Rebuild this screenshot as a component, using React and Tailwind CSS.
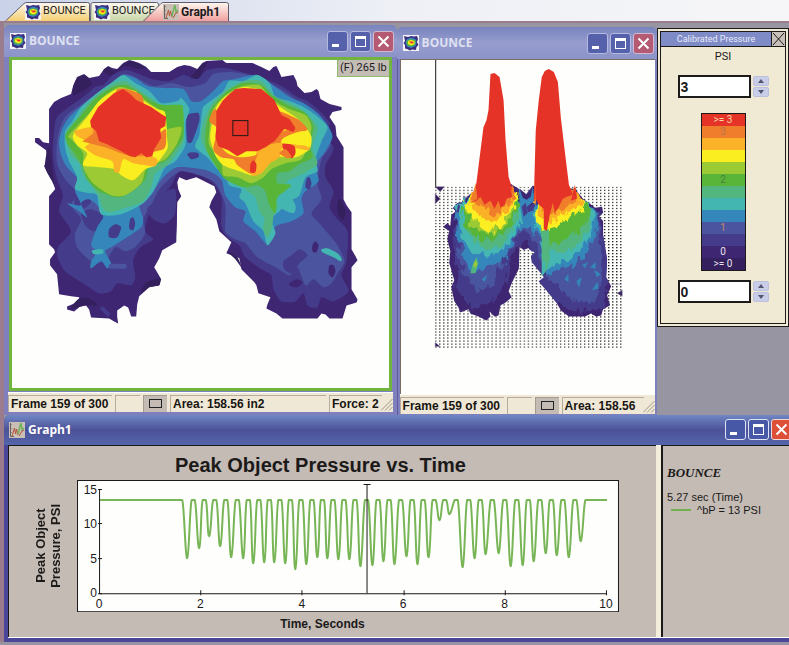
import React from "react";

const COLORS = {
  red: "#e63327",
  orange: "#f07d2b",
  amber: "#fbb128",
  yellow: "#fbee20",
  lime: "#9bca35",
  green: "#58b537",
  sea: "#53b67e",
  teal: "#44b6b1",
  blue: "#3586ba",
  indigo: "#4a549f",
  purple: "#453b8b",
  dark: "#3f2672",
  deep: "#33205c",
};

// closed, slightly rounded curve through every point
const blob = (str) => {
  const pts = str.split(" ").map((p) => p.split(",").map(Number));
  const n = pts.length;
  let d = `M${pts[0]}`;
  for (let i = 0; i < n; i++) {
    const a = pts[(i + n - 1) % n];
    const b = pts[i];
    const c = pts[(i + 1) % n];
    const e = pts[(i + 2) % n];
    d += `C${b[0] + (c[0] - a[0]) / 8},${b[1] + (c[1] - a[1]) / 8}`;
    d += ` ${c[0] - (e[0] - b[0]) / 8},${c[1] - (e[1] - b[1]) / 8} ${c}`;
  }
  return `${d}Z`;
};

const outline =
  "50,110 55,103 62,99 72,95 74,87 78,78 85,75 90,79 100,77 105,70 109,67 113,69 118,70 124,64 130,61 134,62 140,64 147,68 152,73 170,73 178,68 185,66 191,67 198,70 203,64 207,62 223,61 227,64 253,64 262,68 270,72 274,68 277,67 279,71 282,78 294,76 297,82 298,87 305,94 312,93 317,90 319,92 321,100 330,105 342,108 342,111 333,113 330,118 336,127 337,137 344,148 344,200 347,206 352,213 352,250 356,257 358,261 352,268 352,290 358,300 357,303 347,306 343,319 330,319 326,315 322,314 318,319 283,319 277,314 267,309 268,305 271,298 259,294 257,286 255,283 242,270 240,259 227,254 232,243 220,232 217,220 210,208 212,202 217,193 215,187 205,182 197,178 187,181 180,178 178,183 179,190 182,197 178,203 177,243 163,251 160,259 155,268 162,280 160,286 150,288 140,297 138,305 137,317 132,317 129,308 125,306 118,311 118,317 119,324 115,322 110,319 92,318 90,310 87,306 81,307 75,312 68,310 68,307 80,302 80,298 72,297 60,295 58,275 51,266 51,260 56,253 55,250 50,245 50,197 56,190 55,185 45,167 48,160 47,151 36,143 36,139 40,139 44,143 50,144";

const layers = [
  ["deep", "74,88 78,79 85,76 90,80 92,86 80,94 74,96"],
  ["deep", "46,168 48,152 51,150 54,176 56,188 53,182"],
  ["deep", "80,299 92,300 98,306 86,306 72,309"],
  ["deep", "104,72 109,68 116,72 130,62 146,68 140,70 126,67 112,76"],
  ["deep", "196,73 203,66 208,63 200,78 196,86 190,80"],
  ["deep", "338,204 341,200 346,212 344,220 339,216"],
  ["deep", "228,252 238,258 242,268 236,260"],
  ["deep", "146,284 160,279 160,286 150,288 142,294"],
  ["purple", "55,132 58,118 70,108 84,98 96,88 104,86 114,76 126,71 140,75 152,80 170,82 184,76 198,80 208,71 226,69 246,74 266,80 284,88 298,98 308,102 322,114 330,124 328,138 334,150 326,166 326,178 334,192 330,208 338,220 348,232 347,262 342,276 349,292 334,302 322,298 318,308 308,306 304,294 296,302 282,302 274,290 272,276 262,270 246,258 240,246 228,238 222,226 222,198 212,182 196,174 180,172 172,186 160,200 150,214 146,232 154,240 144,246 138,252 134,262 136,278 132,286 118,284 112,292 100,294 84,284 66,272 58,256 60,246 72,232 60,212 64,196 58,180 54,158"],
  ["indigo", "58,142 62,126 68,116 84,104 98,94 112,84 124,75 136,78 154,87 172,84 190,88 206,84 214,75 232,73 254,77 270,84 288,94 300,104 316,114 326,128 331,146 322,160 318,184 322,200 312,214 320,224 330,236 338,246 345,262 338,274 332,284 324,288 314,280 306,286 298,268 290,276 276,268 258,258 246,244 236,240 226,232 226,206 216,184 200,176 182,172 172,178 160,190 154,202 144,220 146,234 136,248 126,252 116,248 106,262 92,262 78,248 76,234 82,220 72,206 78,194 66,180 58,164"],
  ["dark", "157,206 164,202 177,203 176,243 168,232 158,222 150,212"],
  ["purple", "76,196 82,194 92,202 84,210 76,206"],
  ["purple", "82,214 92,210 104,216 102,228 94,232 86,226"],
  ["purple", "284,262 292,256 300,250 308,256 300,264 292,274 285,270"],
  ["dark", "290,284 297,280 303,283 298,288 291,287"],
  ["dark", "313,246 316,242 319,246 317,253 313,252"],
  ["dark", "330,266 334,266 336,272 333,278 329,274"],
  ["blue", "60,142 64,128 72,116 84,106 98,96 114,84 124,76 136,79 148,87 164,89 184,90 192,102 202,102 214,92 224,82 236,80 258,76 276,88 290,98 304,104 318,114 328,126 333,138 326,152 316,166 319,182 306,192 302,200 304,214 292,222 278,226 272,232 270,245 266,244 256,232 244,222 246,212 236,208 226,196 222,180 210,172 196,169 178,168 166,176 158,186 152,196 140,204 144,220 142,228 128,238 112,248 106,252 112,264 108,269 102,262 92,269 92,262 98,252 92,246 98,228 104,218 100,208 90,200 82,204 88,218 80,212 68,204 82,206 76,192 79,180 68,168 62,156"],
  ["purple", "187,120 190,115 199,114 200,122 193,142 188,142"],
  ["purple", "188,155 192,153 199,154 199,158 192,160"],
  ["purple", "164,194 176,190 176,214 166,224 154,220 148,210 156,202"],
  ["purple", "110,230 116,225 122,228 118,238 110,238"],
  ["purple", "131,220 134,218 136,224 134,231 130,229"],
  ["purple", "307,180 310,178 312,184 310,190 306,188"],
  ["teal", "66,132 72,124 82,108 98,94 112,84 124,76 136,84 150,92 162,104 178,102 182,99 190,110 186,124 186,146 176,162 166,168 160,180 154,192 144,204 122,215 102,215 98,196 90,194 76,190 78,178 70,162 66,148"],
  ["blue", "194,150 206,158 214,170 224,182 226,170 204,150"],
  ["teal", "196,148 200,136 202,120 204,108 214,100 224,92 230,82 244,82 258,76 270,84 276,98 290,102 304,108 316,116 328,128 322,142 316,160 318,172 306,178 300,196 290,202 280,212 272,220 276,234 268,246 264,232 254,222 246,204 240,198 242,190 230,186 226,176 216,168 208,158"],
  ["sea", "67,134 76,122 86,108 100,94 116,84 126,82 136,88 150,98 162,106 176,106 184,114 184,142 176,156 168,166 156,174 152,188 144,202 128,208 110,213 103,208 100,198 92,186 84,176 80,164 72,156 68,144"],
  ["sea", "202,140 204,124 212,106 226,92 244,82 262,82 274,96 290,104 304,112 318,128 313,148 318,164 308,172 296,178 288,182 286,192 278,208 270,222 260,212 256,198 246,190 246,182 228,180 218,168 208,154"],
  ["teal", "276,196 288,194 296,206 294,214 280,208"],
  ["green", "67,134 84,114 96,100 114,88 126,86 138,92 152,102 164,106 182,106 184,114 184,138 176,150 166,162 150,168 146,180 136,190 120,198 100,192 88,180 84,168 74,152 68,144"],
  ["green", "206,136 211,112 226,94 244,84 262,86 272,96 288,106 306,114 314,128 310,146 313,158 298,166 290,172 278,174 278,184 292,186 278,198 276,214 270,206 266,192 258,186 244,188 226,180 216,166 208,152"],
  ["lime", "70,136 92,112 104,98 120,88 134,92 150,104 166,116 164,130 182,128 178,144 166,160 148,168 142,184 126,196 112,196 94,184 84,168 84,154 72,140"],
  ["lime", "210,132 213,112 224,98 240,88 260,86 272,100 290,110 306,116 312,128 308,146 302,160 286,164 272,170 264,178 252,184 238,178 224,176 222,160 210,146"],
  ["yellow", "74,136 88,118 100,102 118,90 136,92 142,100 158,110 166,114 168,140 168,150 156,166 146,170 134,181 122,176 116,170 100,168 84,166 88,154 78,146"],
  ["yellow", "212,128 217,108 228,96 244,88 264,92 278,106 296,118 306,128 312,138 310,150 296,158 274,158 264,166 254,176 240,172 224,166 216,156 211,140"],
  ["amber", "76,132 94,128 110,136 130,150 146,154 158,160 156,167 146,166 134,164 124,160 120,173 115,172 113,162 96,156 86,148 90,144 78,137"],
  ["orange", "84,142 94,134 94,126 104,128 112,144 124,146 140,154 164,150 167,140 166,130 156,140 146,156 128,156 106,148 86,143"],
  ["orange", "118,90 128,90 142,96 144,106 130,102 118,98"],
  ["amber", "256,172 258,150 274,144 286,140 298,146 310,146 309,151 296,149 282,150 280,158 268,166 262,174"],
  ["orange", "210,122 216,110 226,130 222,146 228,154 240,158 256,156 270,146 284,132 290,130 278,112 298,120 308,130 300,134 284,142 274,146 260,152 258,164 254,174 250,174 238,166 234,160 222,158 214,150 218,130"],
  ["amber", "258,156 264,148 276,144 284,146 272,162 262,174 252,176"],
  ["red", "283,145 288,144 295,147 296,154 292,159 285,152"],
  ["red", "251,165 254,161 257,165 256,173 251,173"],
  ["yellow", "283,140 290,136 304,132 310,140 310,148 304,146 283,144"],
  ["orange", "280,154 286,150 292,157 288,159"],
  ["teal", "93,251 103,250 104,254 95,255"],
  ["sea", "266,218 274,214 272,230 268,238 264,230"],
  ["teal", "322,250 328,249 338,254 342,259 341,262 334,258 323,253"],
];

const redPeaks = [
  "91,122 99,108 107,101 115,94 124,90 131,95 137,101 152,108 162,115 167,118 166,127 161,130 162,139 155,150 153,157 147,158 142,154 136,158 131,157 122,152 108,145 100,142 97,132 92,128",
  "217,128 217,112 223,102 229,96 236,90 244,89 262,90 275,101 282,116 290,120 296,129 294,133 285,130 275,142 266,148 258,152 247,152 238,157 229,151 219,147 216,138",
];

const surface = [
  ["purple", "455,205 476,190 520,202 548,200 580,198 600,212 604,236 606,260 606,284 600,308 574,310 552,300 536,280 530,258 524,240 516,244 510,260 504,284 494,300 474,308 458,292 455,262 453,230"],
  ["indigo", "455,212 480,200 516,206 524,216 540,202 584,204 598,220 600,250 602,282 592,302 574,300 556,286 543,272 534,240 524,230 514,238 508,252 498,266 492,284 478,290 466,276 458,256"],
  ["blue", "455,212 470,196 518,196 526,216 536,204 590,200 597,217 593,237 587,252 573,263 558,268 546,274 540,240 532,228 522,226 512,240 504,258 494,264 480,268 470,272 464,254 457,240"],
  ["teal", "457,206 470,194 518,196 521,216 517,230 504,248 490,254 472,252 462,238"],
  ["teal", "534,204 560,196 590,202 593,214 590,230 584,244 571,258 557,262 547,266 541,240 534,222"],
  ["sea", "461,206 474,194 519,196 518,216 510,232 502,244 482,249 468,236"],
  ["sea", "536,206 572,196 591,206 588,228 581,240 568,250 558,252 549,248 542,236"],
  ["green", "461,206 474,194 519,196 518,208 510,224 497,237 477,240 467,227"],
  ["green", "535,204 570,196 591,206 586,218 578,230 566,236 556,244 548,240 540,226"],
  ["lime", "463,204 474,194 518,196 515,208 508,220 498,230 486,236 472,224"],
  ["yellow", "464,202 474,190 518,192 514,208 508,214 500,225 487,233 480,223 470,216"],
  ["yellow", "533,200 548,188 584,196 580,210 563,220 554,226 545,230 538,222"],
  ["amber", "468,202 476,188 514,192 512,204 507,211 493,222 480,216"],
  ["amber", "533,198 548,186 580,192 580,204 570,210 560,214 552,222 540,216"],
  ["orange", "472,200 478,184 512,188 510,202 504,208 495,216 486,208"],
  ["orange", "534,194 546,184 576,188 576,200 566,206 560,208 552,216 542,208"],
];

// lower turning points of the trace
const valleys = [
  [187, 557], [199, 547], [209, 535], [220, 545], [231, 556], [243, 557],
  [253, 562], [264, 561], [274, 561], [285, 562], [295, 568], [306, 563],
  [317, 556], [327, 557], [338, 558], [349, 558], [360, 565], [372, 564],
  [383, 560], [394, 563], [406, 555], [417, 563], [428, 556], [439, 519],
  [449, 513], [462, 566], [474, 557], [485, 553], [498, 552], [510, 565],
  [522, 564], [533, 560], [545, 552], [556, 554], [568, 556], [580, 540],
];

const TOP = 499;

const pressurePath = () => {
  let d = `M100,${TOP}H182`;
  let from = 182;
  valleys.forEach(([x, y], i) => {
    const next = valleys[i + 1];
    const mid = next ? (x + next[0]) / 2 : 586;
    const rise = mid - 1.5;
    d += `C${from + 2},${TOP + 4} ${x - 2},${y + 1} ${x},${y}`;
    d += `C${x + 2},${y - 2} ${rise - 2},${TOP + 4} ${rise},${TOP}`;
    from = mid + 1.5;
    d += `H${from}`;
  });
  return `${d}H606`;
};

const scale = [
  ["bg-[#e63327]", ">= 3", "text-[#f6d9a8]"],
  ["bg-[#f07d2b]", "3", "text-[#b0784f]"],
  ["bg-[#fbb128]", "", ""],
  ["bg-[#fbee20]", "", ""],
  ["bg-[#9bca35]", "", ""],
  ["bg-[#58b537]", "2", "text-[#4a8040]"],
  ["bg-[#53b67e]", "", ""],
  ["bg-[#44b6b1]", "", ""],
  ["bg-[#3586ba]", "", ""],
  ["bg-[#4a549f]", "1", "text-[#c58a6a]"],
  ["bg-[#453b8b]", "", ""],
  ["bg-[#3f2672]", "0", "text-[#e8e4ee]"],
  ["bg-[#33205c]", ">= 0", "text-[#e8e4ee]"],
];

const BounceIcon = () => (
  <svg viewBox="0 0 16 16" className="h-4 w-4 shrink-0" aria-hidden="true">
    <rect width="16" height="16" fill="#f4f3f6" />
    <path d="M1 1l4 1 3-1 3 .5L14 1l1 3-1 3 1.500 3-2 2-.5 3-4-.5-2 1-3-1.500-2-.5V10L.5 8 2 6z" fill="#3b2f80" />
    <path d="M4 4l4-1.500 4.500 1.500 1 3.500-1 3.500-4.500 2-4-1.500L2.500 7.500z" fill="#3586ba" />
    <path d="M4 5.500L8 4l4.500 1.500V9l-3 2.500L5 11 3.500 8.500z" fill="#58b537" />
    <path d="M5 6l3-1 3.500 1v3l-3 1.500L5 9z" fill="#fbee20" />
    <path d="M5.500 6.500h5V8L8 8.800l-.5-1z" fill="#e63327" />
  </svg>
);

const GraphIcon = () => (
  <svg viewBox="0 0 16 16" className="h-4 w-4 shrink-0" aria-hidden="true">
    <rect width="16" height="16" fill="#c9bfb6" />
    <path d="M1.500 1v13.500H5M1.500 2.500h1M1.500 6.500h1M1.500 10.500h1" stroke="#6b625f" fill="none" />
    <path d="M3 14l2.500-8 1 6 1-5 1.500 6" stroke="#b5533c" fill="none" />
    <path d="M9 12l2-8 1-3 1 7 2-2" stroke="#6fb45a" fill="none" strokeWidth="1.500" />
    <path d="M10 14l3-5 2-1" stroke="#b5533c" fill="none" />
  </svg>
);

const TitleButtons = ({ active }) => {
  const base = "flex h-[21px] w-[21px] shrink-0 items-center justify-center rounded-[3px] border";
  const blue = active ? "border-[#dfe2f4] bg-[#4658a6]" : "border-[#b4bae0] bg-[#5561ab]";
  const red = active ? "border-[#f3d9d4] bg-[#dd4f36]" : "border-[#d3b9cf] bg-[#b45a72]";
  return (
    <div className="flex gap-[2px]">
      <button aria-label="Minimize" className={`${base} ${blue}`}>
        <svg viewBox="0 0 19 19" className="h-[19px] w-[19px]">
          <path d="M4 12h7v3H4z" fill="#fff" />
        </svg>
      </button>
      <button aria-label="Maximize" className={`${base} ${blue}`}>
        <svg viewBox="0 0 19 19" className="h-[19px] w-[19px]">
          <path d="M4 4h11v11H4zM5 7v7h9V7z" fill="#fff" fillRule="evenodd" />
        </svg>
      </button>
      <button aria-label="Close" className={`${base} ${red}`}>
        <svg viewBox="0 0 19 19" className="h-[19px] w-[19px]">
          <path d="M4.500 4.500l10 10M14.500 4.500l-10 10" stroke="#fff" strokeWidth="2" />
        </svg>
      </button>
    </div>
  );
};

const StatusBar = ({ area, force }) => {
  const cell = "shrink-0 border-t border-l border-[#b9ab9b] px-[2px]";
  return (
    <div className="flex h-5 gap-[3px] overflow-hidden border-t border-white bg-[#efe8d6] pt-[2px] font-['Liberation_Sans',sans-serif] text-xs leading-4 font-bold whitespace-nowrap text-[#181512]">
      <div className={`${cell} w-[104px]`}>Frame 159 of 300</div>
      <div className={`${cell} w-[25px]`} />
      <div className="flex w-6 shrink-0 items-center justify-center border-t border-l border-[#a39a92] bg-[#c5bbb5]">
        <span className="h-[9px] w-[13px] border border-[#222]" />
      </div>
      <div className={force ? `${cell} w-[156px]` : `${cell} min-w-0 flex-1 shrink`}>
        {area}
      </div>
      {force && (
        <div className="min-w-0 flex-1 overflow-hidden border-t border-l border-[#b9ab9b] px-[2px]">
          {force}
        </div>
      )}
      <svg viewBox="0 0 12 16" className="-ml-1 h-4 w-3 shrink-0" aria-hidden="true">
        <path d="M0 15.500L11.500 4M4 15.500L11.500 8M8 15.500l3.500-3.500" stroke="#a29685" fill="none" />
      </svg>
    </div>
  );
};

const PressureMap = () => (
  <svg viewBox="13 61 376 327" className="block h-auto w-full bg-[#fefefd]" role="img" aria-label="Pressure map">
    <polygon points={outline} fill={COLORS.dark} />
    {layers.map(([c, pts], i) => (
      <path key={i} d={blob(pts)} fill={COLORS[c]} />
    ))}
    <path d="M102,308l8,8" stroke={COLORS.purple} strokeWidth="4" fill="none" />
    <path d="M112,267h13" stroke={COLORS.indigo} strokeWidth="5" strokeLinecap="round" />
    {redPeaks.map((pts) => (
      <polygon key={pts} points={pts} fill={COLORS.red} />
    ))}
    <rect x="233.500" y="121.500" width="15" height="15" fill="none" stroke="#1c1a19" />
  </svg>
);

const SurfacePlot = () => (
  <svg viewBox="401 60 253 331" className="block h-auto w-full bg-[#fefefd]" role="img" aria-label="Pressure surface">
    <defs>
      <pattern id="dots" x="435" y="186" width="4" height="3" patternUnits="userSpaceOnUse">
        <rect width="1.200" height="1.100" fill="#000" />
      </pattern>
      <filter id="ragged" x="-5%" y="-5%" width="110%" height="110%">
        <feTurbulence type="fractalNoise" baseFrequency="0.2 0.1" numOctaves="2" seed="4" />
        <feDisplacementMap in="SourceGraphic" scale="13" xChannelSelector="R" yChannelSelector="G" />
      </filter>
      <clipPath id="body">
        <path d="M452,208L458,200 470,192 478,186 510,182 520,188 526,192 533,186 574,186 580,198 590,203 594,206 600,206 602,212 598,216 602,234 606,258 605,276 610,285 606,294 609,304 602,308 600,314 590,312 584,315 568,315 560,309 556,302 548,292 538,280 542,274 530,262 531,250 524,238 520,250 519,266 511,280 507,290 511,296 500,304 498,314 490,312 486,317 476,314 468,308 460,310 454,298 450,286 454,278 449,262 452,250 447,236 450,224 445,224 450,216z" />
      </clipPath>
    </defs>
    <rect x="435" y="186" width="186" height="161" fill="url(#dots)" />
    <path d="M435.500 59v128" stroke="#1c1a19" />
    <path d="M435 186h9l-4 5zM435 193l5 5-5 5zM435 341l5 4h-5zM616 292l5-3v6zM610 283h10M474 331h7" fill={COLORS.deep} stroke="#8a7a9c" strokeWidth="0.500" />
    <path d="M455,211L461,202 470,193 480,186 510,183 518,188 525,194 532,185 574,188 582,198 589,203 594,207 601,206 602,212 598,216 602,220 602,234 606,258 605,276 610,285 606,294 609,304 602,308 600,314 595,315 590,312 584,315 568,315 560,309 556,302 548,292 538,280 544,276 536,266 530,258 531,250 528,248 524,249 519,252 519,266 511,282 508,290 511,296 504,302 500,304 498,314 494,315 489,310 490,315 486,319 478,315 470,312 468,308 460,311 458,306 454,300 451,286 454,279 449,262 450,250 447,238 449,230 443,226 447,222 450,225 451,214z" fill={COLORS.dark} />
    <g clipPath="url(#body)">
      <g filter="url(#ragged)">
        {surface.map(([c, pts], i) => (
          <polygon key={i} points={pts} fill={COLORS[c]} />
        ))}
      </g>
    </g>
    <path d="M519 246l4 3 5-2 1 3 5 1-4 4 1 6 12 15-5 4-12-6-8-1z" fill="#fefefd" />
    <path d="M519 246l4 3 5-2 1 3 5 1-4 4 1 6 12 15-5 4-12-6-8-1z" fill="url(#dots)" />
    <path d="M518,188L526,194 532,186 534,200 526,206 528,216 522,222 520,210z" fill={COLORS.blue} />
    <path d="M519,188L526,194 532,186 530,196 526,199 522,197z" fill={COLORS.dark} />
    <path d="M521,206l4-4 2 10-4 4z" fill={COLORS.purple} />
    <path d="M541,230l7-2 1,30 -4,12 -4,5z" fill={COLORS.sea} />
    <path d="M542,258l3 4-1 9-3 4z" fill={COLORS.teal} />
    <path d="M470,272l2-8 4-8 2 6-3,10z" fill={COLORS.sea} />
    <path d="M473,264l2-5 2 4-2 4z" fill={COLORS.lime} />
    <path d="M564,278l3-4v6zM576,280l4-3-2,8zM590,266l4-4v5zM592,288l4-6 1,5zM594,270l5,3-3,2zM582,264l4-2-2,4zM482,278l4-3-2,5z" fill={COLORS.blue} stroke={COLORS.blue} />
    <path d="M472,202L476,182 483,127 486,120 488,110 490,74 494,73 499,77 503,100 505,140 508,176 511,186 512,196 506,198 504,204 500,207 498,200 494,208 490,200 484,204 480,196 476,200z" fill={COLORS.red} />
    <path d="M533,202L535,130 538,100 541,77 544,71 548,69 553,72 557,82 560,118 565,160 568,184 572,194 566,196 562,198 558,206 554,212 552,202 549,214 546,230 543,228 543,208 538,204 535,198z" fill={COLORS.red} />
    <path d="M471 202l4-20 2 16zM512 200l-2-14 2 6 4 6zM534 204v-30l1 30z" fill={COLORS.orange} />
    <path d="M570 200l4-16 2 14z" fill={COLORS.red} />
  </svg>
);

const Spinner = ({ label }) => (
  <div className="flex w-4 flex-col gap-px">
    <button aria-label={`Increase ${label}`} className="flex h-[10px] items-center justify-center rounded-[2px] border border-[#bac0de] bg-[#c9cee8]">
      <svg viewBox="0 0 6 4" className="h-1 w-[6px]"><path d="M0 4l3-4 3 4z" fill="#54546c" /></svg>
    </button>
    <button aria-label={`Decrease ${label}`} className="flex h-[10px] items-center justify-center rounded-[2px] border border-[#bac0de] bg-[#c9cee8]">
      <svg viewBox="0 0 6 4" className="h-1 w-[6px]"><path d="M0 0l3 4 3-4z" fill="#54546c" /></svg>
    </button>
  </div>
);

const LimitField = ({ label, value }) => (
  <div className="flex items-center gap-[2px]">
    <input
      type="text"
      aria-label={label}
      defaultValue={value}
      className="h-[23px] w-[73px] border-2 border-[#1d1b1a] bg-white px-px font-['Liberation_Sans',sans-serif] text-sm font-bold text-[#1d1b1a]"
    />
    <Spinner label={label} />
  </div>
);

const PressurePanel = () => (
  <aside className="mt-[5px] w-[132px] shrink-0 border border-[#1d1b1a] bg-[#f0e9d4] p-[2px] font-[Roboto,sans-serif]">
    <div className="flex flex-col items-center border border-[#1d1b1a] pb-5">
      <div className="flex h-[15px] w-full items-center border-b border-[#1d1b1a] bg-[#7f8bc7]">
        <h2 className="flex-1 text-center text-[9px] leading-3 text-[#e9ebf8]">Calibrated Pressure</h2>
        <button aria-label="Close panel" className="h-[14px] w-[14px] border-l border-[#1d1b1a] bg-[#c8c0b8]">
          <svg viewBox="0 0 13 14" className="h-[14px] w-[13px]">
            <path d="M1 1l11 12M12 1L1 13" stroke="#1d1b1a" />
          </svg>
        </button>
      </div>
      <p className="mt-1 text-[11px] leading-3 text-[#1d1b1a]">PSI</p>
      <div className="mt-3"><LimitField label="upper limit" value="3" /></div>
      <div className="mt-[15px] w-[45px] border border-[#1d1b1a]">
        {scale.map(([bg, text, color], i) => (
          <div key={i} className={`h-3 text-center text-[10px] leading-3 ${bg} ${color}`}>
            {text}
          </div>
        ))}
      </div>
      <div className="mt-[9px]"><LimitField label="lower limit" value="0" /></div>
    </div>
  </aside>
);

const MapWindow = ({ children, className, bodyClass, status }) => (
  <section className={`flex min-w-0 flex-col rounded-t-md bg-[#7f7fbd] ${className}`}>
    <header className="flex h-8 shrink-0 items-center gap-[3px] rounded-t-md bg-linear-to-b from-[#7884bd] via-[#979dce] to-[#8c93c8] pr-[3px] pl-[6px]">
      <BounceIcon />
      <h2 className="flex-1 font-['Open_Sans',sans-serif] text-xs font-bold text-[#dfe1f2]">BOUNCE</h2>
      <TitleButtons />
    </header>
    <div className={`flex flex-1 flex-col ${bodyClass}`}>
      {children}
      {status}
    </div>
  </section>
);

const PressureChart = () => (
  <svg viewBox="77 479 541 132" className="block h-auto w-full" role="img" aria-label="Peak object pressure against time">
    <rect x="77.500" y="479.500" width="540" height="131" fill="#fefefd" stroke="#1c1a19" />
    <path d="M99.500 488v104.500H606" fill="none" stroke="#1c1a19" />
    {[15, 10, 5, 0].map((v, i) => (
      <g key={v}>
        <path d={`M98 ${[488.5, 522.5, 557.5, 592.5][i]}h4`} stroke="#1c1a19" />
        <text x="97" y={[493, 527, 562, 596][i]} textAnchor="end" fontSize="12" fontFamily="Liberation Sans, sans-serif" fill="#1c1a19">{v}</text>
      </g>
    ))}
    {[0, 2, 4, 6, 8, 10].map((v) => (
      <g key={v}>
        {v > 0 && <path d={`M${Math.round(99 + v * 50.6) + 0.5} 589v5`} stroke="#1c1a19" />}
        <text x={99 + v * 50.6} y="607" textAnchor="middle" fontSize="12" fontFamily="Liberation Sans, sans-serif" fill="#1c1a19">{v}</text>
      </g>
    ))}
    <path d={pressurePath()} fill="none" stroke="#78b556" strokeWidth="2" strokeLinejoin="round" />
    <path d="M363 483.500h7M366.500 483.500V592" stroke="#1c1a19" />
  </svg>
);

const Tab = ({ fill, slant, width, children, className }) => (
  <button className={`relative flex h-[19px] shrink-0 items-center ${className}`}>
    <svg viewBox={`0 0 ${width} 19`} preserveAspectRatio="none" className="absolute inset-0 h-full w-full" aria-hidden="true">
      <defs>
        <linearGradient id={`tab${width}`} x1="0" y1="0" x2="0" y2="1">
          <stop offset="0" stopColor="#fdf8f0" />
          <stop offset="1" stopColor={fill} />
        </linearGradient>
      </defs>
      <path d={`M0.500 19L${slant} 1.500q1-1 3-1H${width - 2.5}q2 0 2 2V19`} fill={`url(#tab${width})`} stroke="#5c5a6c" />
    </svg>
    <span className="relative flex items-center gap-[2px]">{children}</span>
  </button>
);

export default function App() {
  return (
    <main className="min-h-screen overflow-hidden bg-[#9895a2] font-[Roboto,sans-serif]">
      <nav className="flex h-[21px] items-end overflow-hidden bg-linear-to-r from-[#c9d2e8] via-[#eef0f6] to-[#f6f6f8] pl-[5px] text-[11px] text-[#1b1a1c]">
        <Tab fill="#f5cf72" slant={19} width={85} className="w-[85px] pl-5"><BounceIcon />BOUNCE</Tab>
        <Tab fill="#c9d6a6" slant={1} width={69} className="w-[69px] pl-1"><BounceIcon />BOUNCE</Tab>
        <Tab fill="#f0a09e" slant={18} width={86} className="-ml-4 w-[86px] pl-5">
          <GraphIcon />
          <strong className="text-xs">Graph1</strong>
        </Tab>
      </nav>

      <div className="border-t-2 border-l-4 border-[#9a7c8c]">
        <div className="flex items-start">
          <div className="flex min-w-0 flex-1 items-stretch">
            <MapWindow
              className="mt-[2px] flex-[392]"
              bodyClass="pr-1 pb-[3px] pl-1"
              status={<StatusBar area="Area: 158.56 in2" force="Force: 2" />}
            >
              <div className="relative mx-px mb-px border-[3px] border-[#72b53e]">
                <PressureMap />
                <div className="absolute top-0 right-0 border-b border-l border-[#8cbb6a] bg-[#c4bdb5] px-[2px] text-[11px] leading-4 text-[#1b1a1c]">
                  (F) 265 lb
                </div>
              </div>
            </MapWindow>
            <MapWindow
              className="mt-1 flex-[260]"
              bodyClass="border-l border-[#5f5aa0] pr-[2px] pb-px pl-[2px]"
              status={<StatusBar area="Area: 158.56" />}
            >
              <div className="flex-1 border-t border-l border-[#7a6c64] bg-[#fefefd]">
                <SurfacePlot />
              </div>
            </MapWindow>
          </div>
          <PressurePanel />
        </div>

        <section className="-mr-[6px] rounded-t-md bg-[#4a4798] pb-1">
          <header className="flex h-[30px] items-center gap-[3px] rounded-t-md bg-linear-to-b from-[#7087c4] via-[#4c5197] to-[#5466ab] pr-[3px] pl-[5px]">
            <GraphIcon />
            <h2 className="flex-1 font-['Open_Sans',sans-serif] text-xs font-bold text-white">Graph1</h2>
            <TitleButtons active />
          </header>
          <div className="ml-1 flex border-b border-white">
            <div className="min-w-0 flex-1 border-t border-l border-[#1c1a19] bg-[#c4bbb5] pb-[5px] font-['Liberation_Sans',sans-serif] text-[#1c1a19]">
              <h1 className="pt-2 pr-6 pb-1 text-center text-[20px] leading-[22px] font-bold">
                Peak Object Pressure vs. Time
              </h1>
              <div className="flex items-center pr-[37px]">
                <div className="flex w-[68px] shrink-0 justify-center pl-[10px]">
                  <p className="rotate-180 text-center text-[13px] leading-[15px] font-bold whitespace-nowrap [writing-mode:vertical-rl]">
                    Peak Object
                    <br />
                    Pressure, PSI
                  </p>
                </div>
                <div className="min-w-0 flex-1">
                  <PressureChart />
                </div>
              </div>
              <p className="mt-1 pr-5 text-center text-xs leading-4 font-bold">Time, Seconds</p>
            </div>
            <div className="w-[5px] shrink-0 bg-[#f3eddb]" />
            <div className="w-[134px] shrink-0 border-t border-l-2 border-[#1c1a19] bg-[#c4bbb5] pt-5 pl-1 text-[11px] leading-[13px] text-[#1c1a19]">
              <p className="font-['Liberation_Serif',serif] text-[13px] font-bold italic">BOUNCE</p>
              <p className="mt-3 font-['Liberation_Sans',sans-serif]">5.27 sec (Time)</p>
              <p className="flex items-center gap-[6px] pl-1 font-['Liberation_Sans',sans-serif]">
                <span className="h-[2px] w-5 bg-[#72b04e]" />
                ^bP = 13 PSI
              </p>
            </div>
          </div>
        </section>
      </div>
    </main>
  );
}
